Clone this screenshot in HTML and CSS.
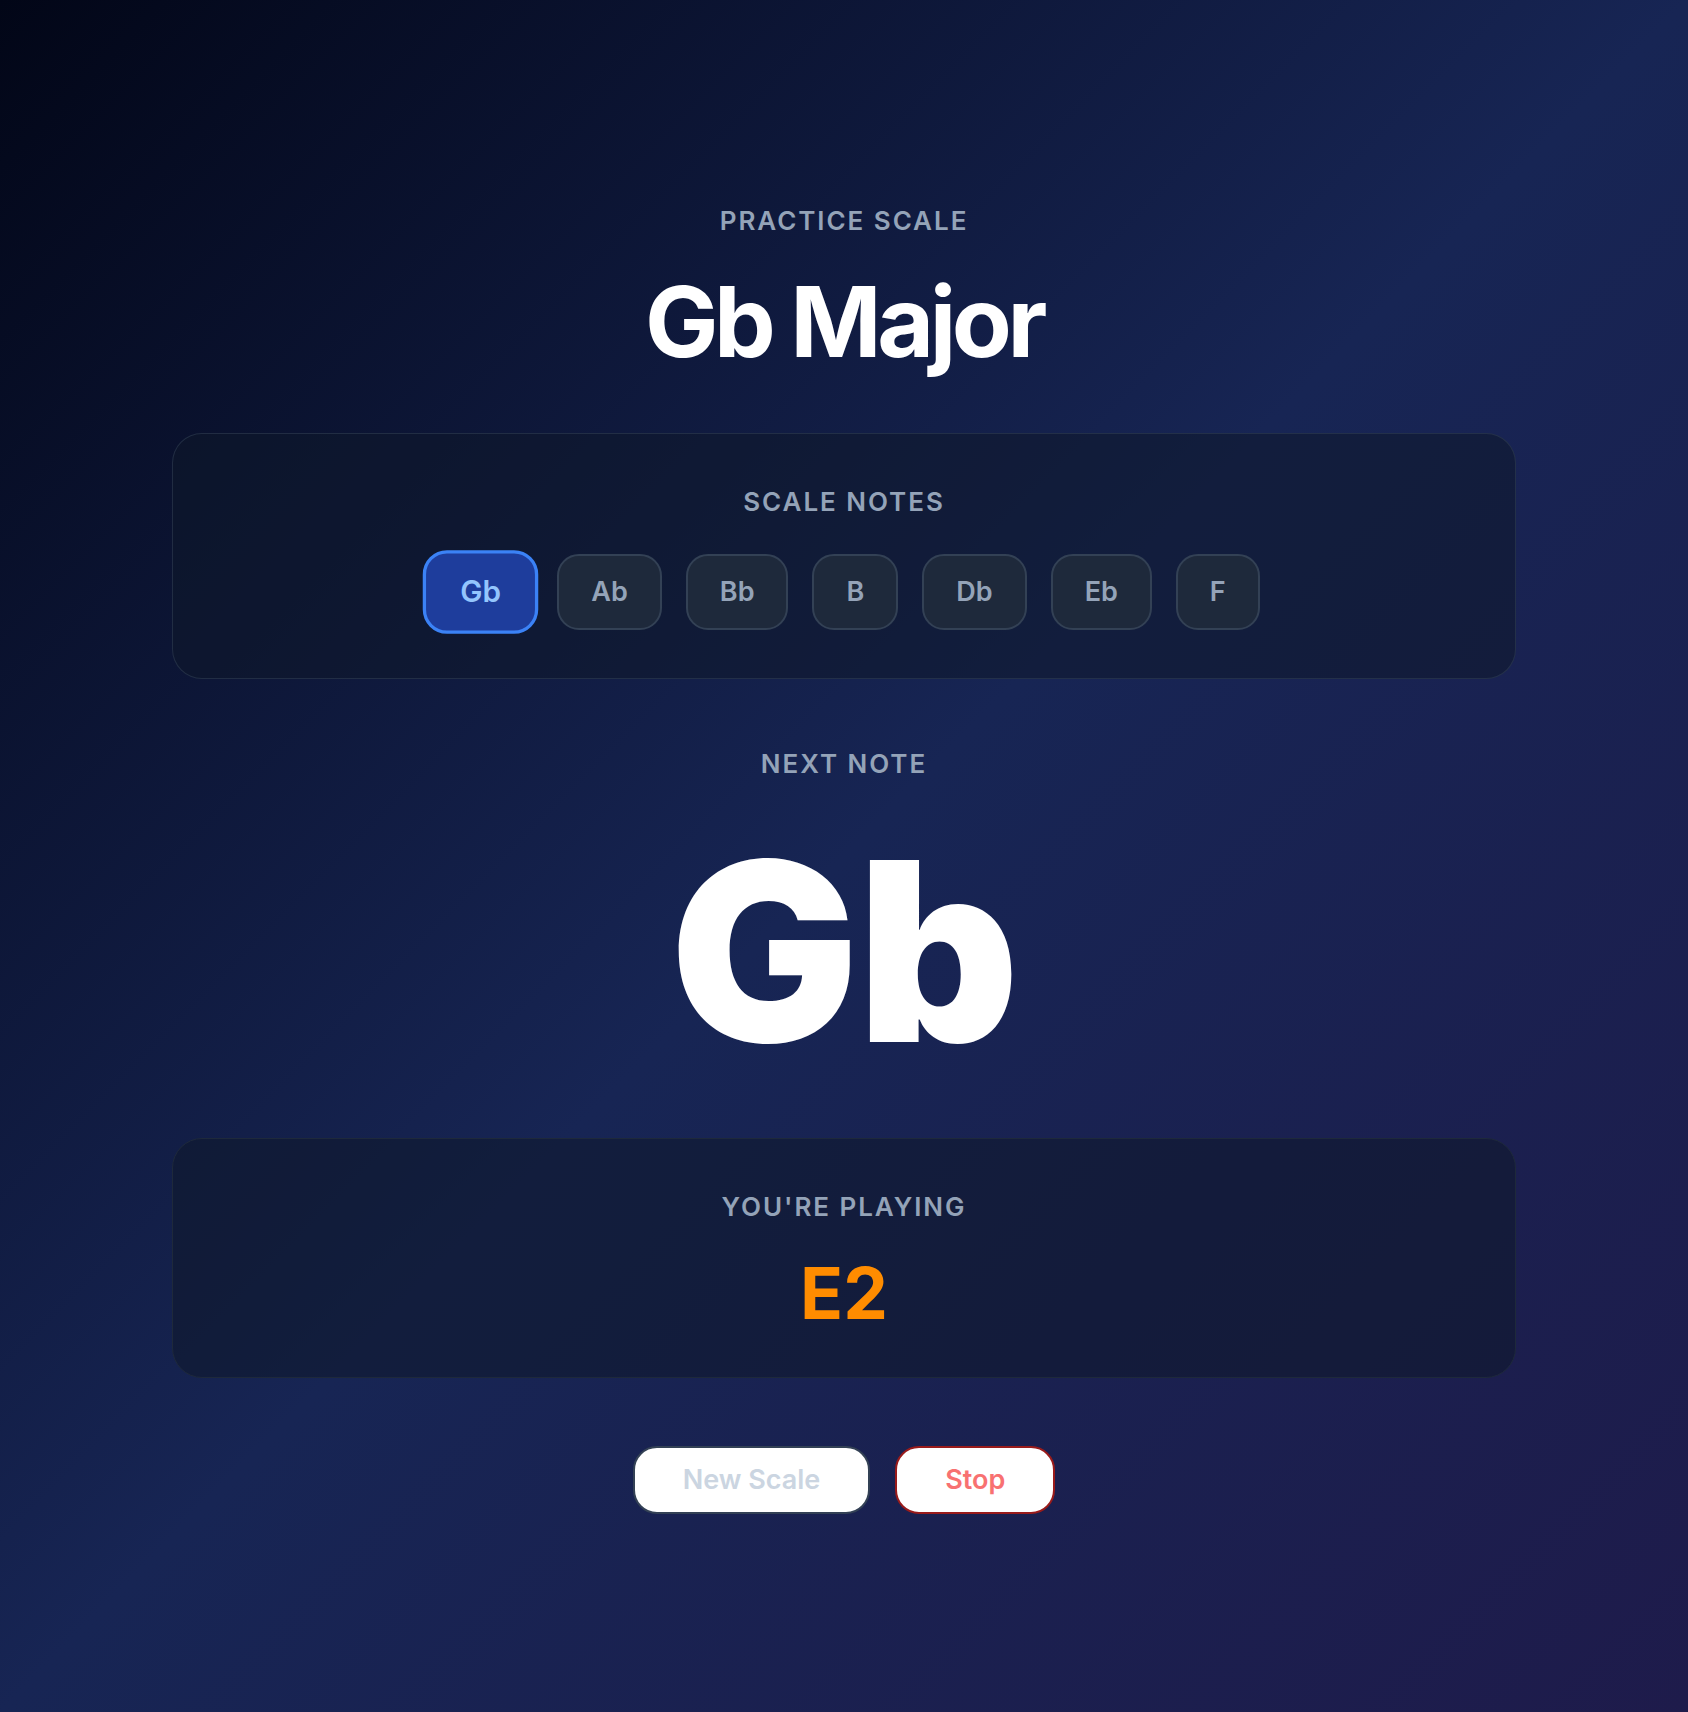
FILE: index.html
```html
<!DOCTYPE html>
<html lang="en">
<head>
<meta charset="utf-8">
<title>Practice Scale</title>
<link rel="stylesheet" href="styles.css">
</head>
<body>
<main class="app">
  <div class="label">Practice Scale</div>
  <h1 class="scale-name">Gb Major</h1>

  <section class="card notes-card">
    <div class="label">Scale Notes</div>
    <div class="notes">
      <button class="note active">Gb</button>
      <button class="note">Ab</button>
      <button class="note">Bb</button>
      <button class="note">B</button>
      <button class="note">Db</button>
      <button class="note">Eb</button>
      <button class="note">F</button>
    </div>
  </section>

  <div class="label next-label">Next Note</div>
  <div class="next-note">Gb</div>

  <section class="card playing-card">
    <div class="label">You're Playing</div>
    <div class="playing">E2</div>
  </section>

  <div class="actions">
    <button class="action new-scale">New Scale</button>
    <button class="action stop">Stop</button>
  </div>
</main>
</body>
</html>
```

FILE: styles.css
```css
* {
  box-sizing: border-box;
}

html, body {
  margin: 0;
  padding: 0;
}

body {
  min-height: 100vh;
  font-family: Inter, "Noto Sans", "Liberation Sans", sans-serif;
  background: linear-gradient(to bottom right, #020617 0%, #172554 50%, #1e1b4b 100%);
  color: #ffffff;
}

.app {
  min-height: 100vh;
  width: 1344px;
  margin: 0 auto;
  padding-top: 201px;
  display: flex;
  flex-direction: column;
  align-items: center;
  text-align: center;
}

.label {
  font-size: 26px;
  line-height: 40px;
  font-weight: 600;
  letter-spacing: 0.075em;
  text-transform: uppercase;
  color: #94a3b8;
}

.scale-name {
  margin: 32px 0 0;
  font-size: 98px;
  line-height: 98px;
  font-weight: 700;
  letter-spacing: -0.045em;
  color: #ffffff;
}

.card {
  width: 100%;
  border-radius: 30px;
  padding: 48px;
  background: rgba(15, 23, 42, 0.55);
}

.notes-card {
  margin-top: 62px;
  border: 1px solid rgba(51, 65, 85, 0.55);
}

.notes {
  margin-top: 32px;
  display: flex;
  justify-content: center;
  gap: 24px;
}

.note {
  font-family: inherit;
  font-size: 27px;
  line-height: 40px;
  font-weight: 600;
  padding: 16px 32px;
  border-radius: 22px;
  border: 2px solid #334155;
  background: #1e293b;
  color: #94a3b8;
  cursor: pointer;
}

.note.active {
  transform: scale(1.1);
  padding: 15px 31px;
  background: #1e3d9c;
  border: 3px solid #3b82f6;
  color: #93c5fd;
}

.next-label {
  margin-top: 65px;
}

.next-note {
  margin-top: 42px;
  font-size: 250px;
  line-height: 250px;
  font-weight: 900;
  letter-spacing: -0.005em;
  color: #ffffff;
}

.playing-card {
  margin-top: 62px;
  border: 1px solid #1e293b;
}

.playing {
  margin-top: 30px;
  font-size: 71px;
  line-height: 72px;
  font-weight: 700;
  color: #ff8c00;
}

.actions {
  margin-top: 68px;
  display: flex;
  gap: 25px;
}

.action {
  font-family: inherit;
  font-size: 27px;
  line-height: 40px;
  font-weight: 600;
  padding: 12px 48px;
  border-radius: 24px;
  background: #ffffff;
  cursor: pointer;
}

.new-scale {
  border: 2px solid #334155;
  color: #cbd5e1;
}

.stop {
  border: 2px solid #991b1b;
  color: #f87171;
}
```
